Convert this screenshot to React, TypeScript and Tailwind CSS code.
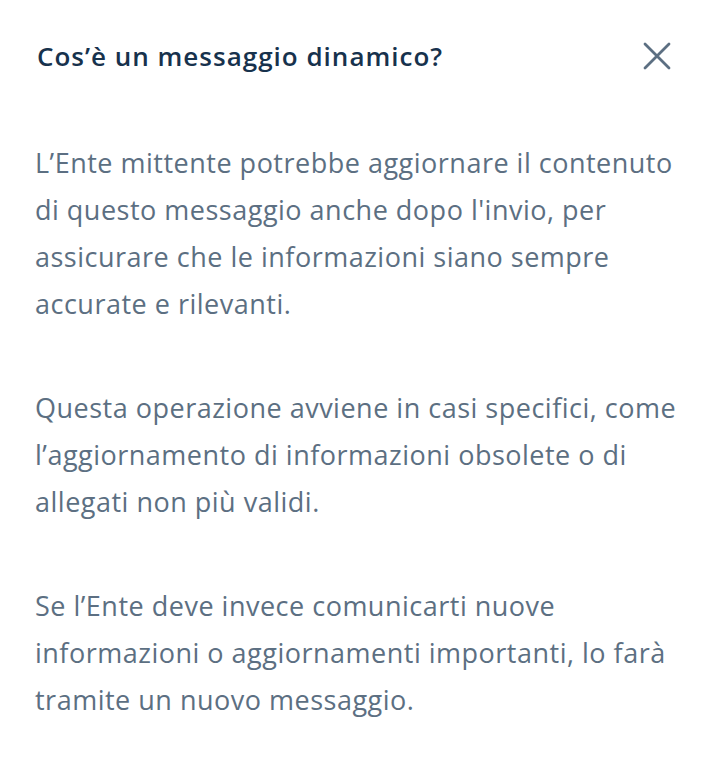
export default function App() {
  return (
    <main className="min-h-screen w-[710px] bg-white font-['Open_Sans','Lato',sans-serif]">
      <header className="flex items-center justify-between pl-[37px] pr-[37px] pt-[38px]">
        <h1 className="text-[26px] font-semibold leading-[36px] tracking-[1px] text-[#17324d]">
          Cos’è un messaggio dinamico?
        </h1>
        <button aria-label="Chiudi" className="flex h-[32px] w-[32px] items-center justify-center text-[#5c6f82]">
          <svg width="28" height="28" viewBox="0 0 28 28" fill="none" stroke="currentColor" strokeWidth="2.8" strokeLinecap="round">
            <path d="M2 2 L26 26 M26 2 L2 26" />
          </svg>
        </button>
      </header>
      <section className="mt-[65px] space-y-[57px] pl-[35px] pr-[15px] text-[27px] leading-[47px] tracking-[0.5px] text-[#5c6f82]">
        <p>
          L’Ente mittente potrebbe aggiornare il contenuto di questo messaggio anche dopo l'invio, per assicurare che le informazioni siano sempre accurate e rilevanti.
        </p>
        <p>
          Questa operazione avviene in casi specifici, come l’aggiornamento di informazioni obsolete o di allegati non più validi.
        </p>
        <p>
          Se l’Ente deve invece comunicarti nuove informazioni o aggiornamenti importanti, lo farà tramite un nuovo messaggio.
        </p>
      </section>
    </main>
  );
}
